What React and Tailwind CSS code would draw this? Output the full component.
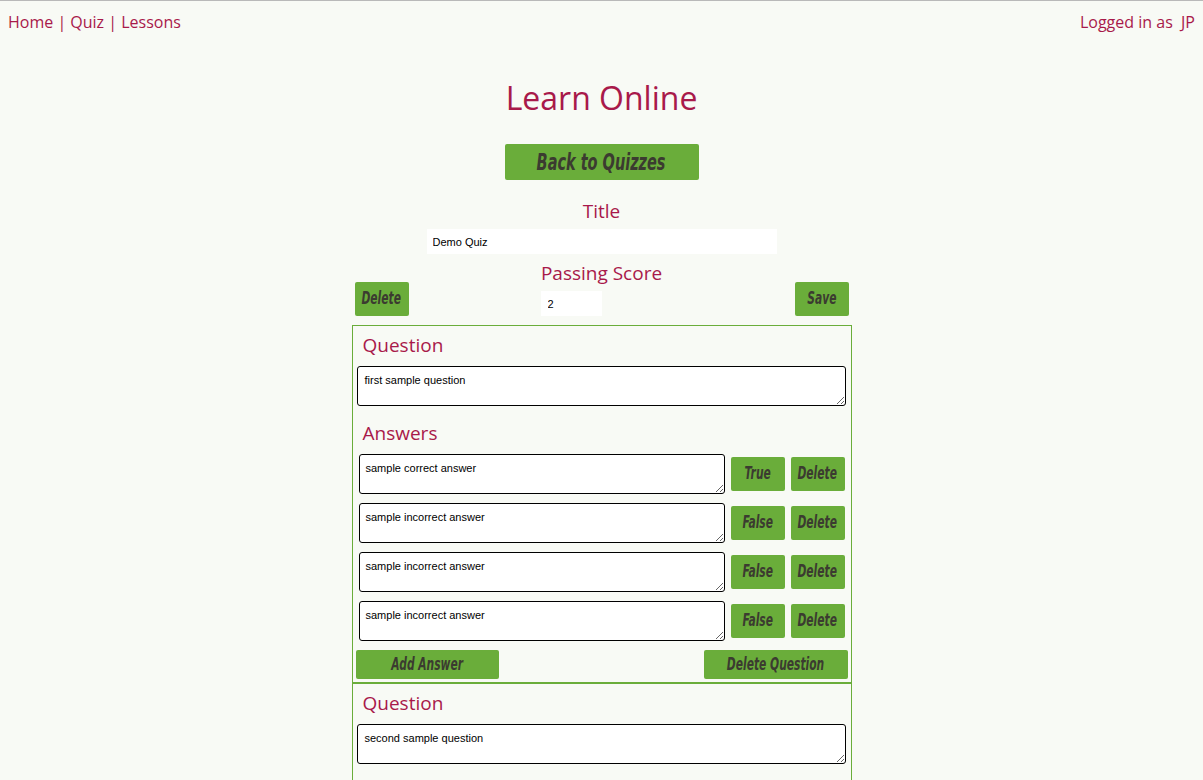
import React from 'react'

const answers = [
  { text: 'sample correct answer', ok: true },
  { text: 'sample incorrect answer', ok: false },
  { text: 'sample incorrect answer', ok: false },
  { text: 'sample incorrect answer', ok: false },
]

const btn = "rounded-[2px] bg-[#6aad3a] text-[#3b3b30] font-bold italic flex items-center justify-center overflow-hidden whitespace-nowrap"
const btnFont = { fontFamily: '"DejaVu Sans Condensed", "DejaVu Sans", sans-serif' }
const plain = { fontFamily: '"Liberation Sans", Arial, sans-serif' }

function Btn({ className, children }) {
  return (
    <button className={`${btn} ${className}`} style={btnFont}>
      <span className="inline-block scale-x-[0.7]">{children}</span>
    </button>
  )
}

function QuestionBox({ text, items }) {
  return (
    <section className="border border-[#6aad3a]">
      <h2 className="pl-[10px] pt-[6px] h-[40px] text-[19px] leading-[27px]">Question</h2>
      <textarea defaultValue={text} className="ml-[4px] block w-[489px] h-[40px] rounded-[3px] border border-black bg-white px-[7px] pt-[5px] text-[11px] text-black resize-y" style={plain} />
      {items && (
        <>
          <h2 className="pl-[10px] pt-[14px] h-[48px] text-[19px] leading-[27px]">Answers</h2>
          <div className="flex flex-col gap-[9px] pl-[6px]">
            {items.map((a, i) => (
              <div key={i} className="flex items-center gap-[6px]">
                <textarea defaultValue={a.text} className="block w-[366px] h-[40px] rounded-[3px] border border-black bg-white px-[6px] pt-[5px] text-[11px] text-black" style={plain} />
                <Btn className="w-[54px] h-[34px] text-[17px]">{a.ok ? 'True' : 'False'}</Btn>
                <Btn className="w-[54px] h-[34px] text-[17px]">Delete</Btn>
              </div>
            ))}
          </div>
          <div className="flex justify-between px-[3px] mt-[9px] pb-[3px]">
            <Btn className="w-[143px] h-[29px] text-[17px]">Add Answer</Btn>
            <Btn className="w-[144px] h-[29px] text-[17px]">Delete Question</Btn>
          </div>
        </>
      )}
      {!items && <div className="h-[20px]" />}
    </section>
  )
}

export default function App() {
  return (
    <div className="min-h-[780px] bg-[#f8faf5] border-t border-[#b9b9b9] text-[#a8194a]" style={{ fontFamily: '"Open Sans", sans-serif' }}>
      <nav className="flex justify-between px-[8px] pt-[10px] text-[16px] leading-[22px]">
        <div>Home | Quiz | Lessons</div>
        <div>Logged in as&nbsp; JP</div>
      </nav>
      <h1 className="text-center text-[32px] leading-[44px] mt-[43px]">Learn Online</h1>
      <div className="flex justify-center mt-[24px]">
        <Btn className="w-[194px] h-[36px] text-[23px]">Back to Quizzes</Btn>
      </div>
      <div className="text-center text-[19px] leading-[27px] mt-[18px]">Title</div>
      <div className="flex justify-center mt-[4px]">
        <input defaultValue="Demo Quiz" className="w-[350px] h-[25px] bg-white px-[6px] text-[11px] text-black outline-none" style={plain} />
      </div>
      <div className="text-center text-[19px] leading-[27px] mt-[6px]">Passing Score</div>
      <div className="w-[500px] mx-auto">
        <div className="flex items-start px-[3px] -mt-[5px] h-[43px]">
          <Btn className="w-[54px] h-[34px] text-[17px]">Delete</Btn>
          <input defaultValue="2" className="ml-[132px] mt-[9px] w-[61px] h-[25px] bg-white px-[7px] text-[11px] text-black outline-none" style={plain} />
          <Btn className="ml-auto w-[54px] h-[34px] text-[17px]">Save</Btn>
        </div>
        <QuestionBox text="first sample question" items={answers} />
        <QuestionBox text="second sample question" />
      </div>
    </div>
  )
}
